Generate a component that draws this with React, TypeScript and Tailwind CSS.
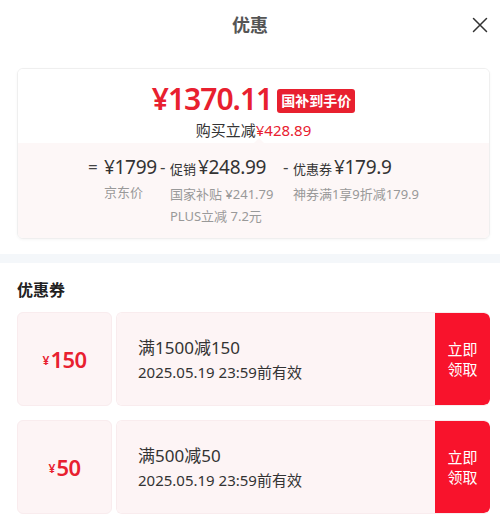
import React from "react";

const font = { fontFamily: '"Noto Sans", "Noto Sans CJK SC", sans-serif' };

function Coupon({ amount, title }: { amount: string; title: string }) {
  return (
    <div className="flex h-[94px]">
      <div className="w-[95px] shrink-0 rounded-[6px] bg-[#fdf4f5] border border-[#f9ecee] flex items-center justify-center text-[#e8202f]">
        <span className="text-[12px] font-semibold mt-[4px] mr-[1px]">¥</span>
        <span className="text-[22px] font-semibold leading-none tracking-[-0.6px]">{amount}</span>
      </div>
      <div className="w-[4px] shrink-0" />
      <div className="flex-1 flex rounded-[6px] overflow-hidden border border-[#f9ecee] border-r-0">
        <div className="flex-1 bg-[#fdf4f5] pl-[21px] flex flex-col justify-center text-[#333]">
          <div className="text-[17px] leading-[24px]">{title}</div>
          <div className="text-[15px] leading-[22px] mt-[1px]">2025.05.19 23:59前有效</div>
        </div>
        <div className="w-[55px] bg-[#f8132c] rounded-r-[6px] flex flex-col items-center justify-center text-white text-[15px] leading-[20px]">
          <span>立即</span>
          <span>领取</span>
        </div>
      </div>
    </div>
  );
}

export default function App() {
  return (
    <div className="w-[500px] h-[518px] bg-white overflow-hidden" style={font}>
      <div className="relative h-[50px] flex items-center justify-center">
        <span className="text-[18px] font-bold text-[#555]">优惠</span>
        <svg className="absolute right-[12px] top-[17px]" width="16" height="16" viewBox="0 0 16 16" fill="none" stroke="#333" strokeWidth="1.5" strokeLinecap="round">
          <path d="M1.5 1.5L14.5 14.5M14.5 1.5L1.5 14.5" />
        </svg>
      </div>
      <div className="pl-[17px] pr-[10px] pt-[18px]">
        <div className="rounded-[6px] border border-[#efefef] shadow-[0_1px_3px_rgba(0,0,0,0.04)] overflow-hidden">
          <div className="bg-white pt-[13px] pb-[4px] flex flex-col items-center">
            <div className="flex items-center h-[34px]">
              <span className="text-[#e8202f] text-[30px] font-semibold leading-[34px] tracking-[-1px]">¥1370.11</span>
              <span className="ml-[5px] bg-[#e8202f] text-white text-[14px] font-bold leading-[24px] px-[4px] rounded-[3px] mt-[3px]">国补到手价</span>
            </div>
            <div className="text-[15px] leading-[18px] mt-[5px]">
              <span className="text-[#333]">购买立减</span>
              <span className="text-[#e8202f]">¥428.89</span>
            </div>
          </div>
          <div className="relative bg-[#fdf7f7] pt-[12px] pb-[11px] flex justify-center">
            <div className="absolute top-[-5px] left-[236px] w-0 h-0 border-l-[5px] border-r-[5px] border-b-[5px] border-l-transparent border-r-transparent border-b-[#fdf7f7]" />
            <div className="flex">
              <div className="flex w-[72px]">
                <span className="w-[16px] text-[17px] leading-[24px] text-[#444]">=</span>
                <div className="flex flex-col">
                  <span className="text-[19px] leading-[24px] text-[#333] tracking-[-0.3px]">¥1799</span>
                  <span className="text-[13px] leading-[22px] text-[#999] mt-[2px]">京东价</span>
                </div>
              </div>
              <div className="flex w-[123px]">
                <span className="w-[10px] text-[17px] leading-[24px] text-[#444]">-</span>
                <div className="flex flex-col">
                  <span className="leading-[24px] text-[#333] whitespace-nowrap">
                    <span className="text-[13px]">促销</span>
                    <span className="text-[19px] ml-[2px] tracking-[-0.3px]">¥248.99</span>
                  </span>
                  <span className="text-[13px] leading-[22px] text-[#999] mt-[2px] whitespace-nowrap">国家补贴 ¥241.79</span>
                  <span className="text-[13px] leading-[22px] text-[#999] whitespace-nowrap">PLUS立减 7.2元</span>
                </div>
              </div>
              <div className="flex">
                <span className="w-[10px] text-[17px] leading-[24px] text-[#444]">-</span>
                <div className="flex flex-col">
                  <span className="leading-[24px] text-[#333] whitespace-nowrap">
                    <span className="text-[13px]">优惠券</span>
                    <span className="text-[19px] ml-[2px] tracking-[-0.3px]">¥179.9</span>
                  </span>
                  <span className="text-[13px] leading-[22px] text-[#999] mt-[2px] whitespace-nowrap">神券满1享9折减179.9</span>
                </div>
              </div>
            </div>
          </div>
        </div>
      </div>
      <div className="h-[9px] bg-[#f4f7fa] mt-[15px]" />
      <div className="pl-[17px] pr-[10px]">
        <div className="text-[16px] font-bold text-[#222] leading-[24px] mt-[15px]">优惠券</div>
        <div className="mt-[10px] flex flex-col gap-[14px]">
          <Coupon amount="150" title="满1500减150" />
          <Coupon amount="50" title="满500减50" />
        </div>
      </div>
    </div>
  );
}
